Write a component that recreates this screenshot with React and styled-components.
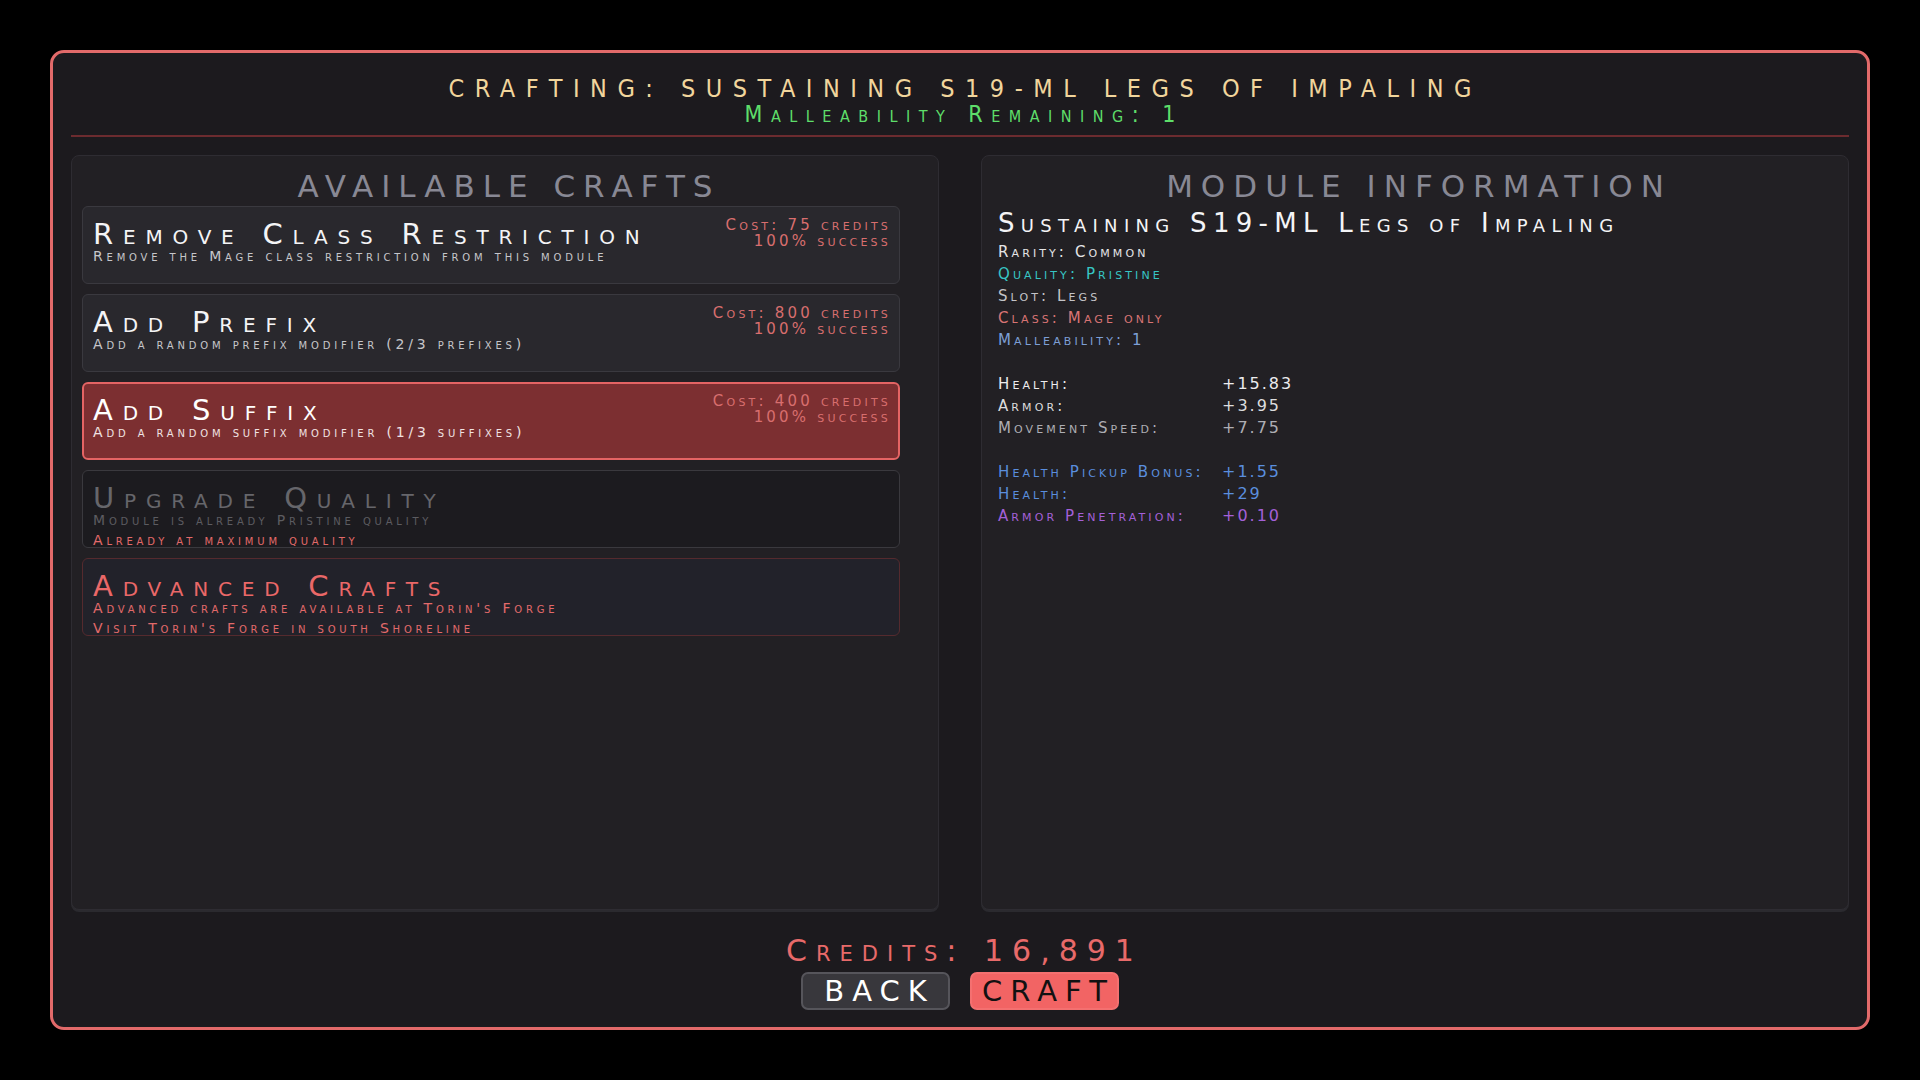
import React from 'react';
import styled, { createGlobalStyle } from 'styled-components';

const GlobalStyle = createGlobalStyle`
  body {
    margin: 0;
    background: #000;
    font-family: "DejaVu Sans", "Liberation Sans", sans-serif;
  }
`;

const crafts = [
  {
    title: 'Remove Class Restriction',
    desc: 'Remove the Mage class restriction from this module',
    cost: 'Cost: 75 credits',
    chance: '100% success',
  },
  {
    title: 'Add Prefix',
    desc: 'Add a random prefix modifier (2/3 prefixes)',
    cost: 'Cost: 800 credits',
    chance: '100% success',
  },
  {
    title: 'Add Suffix',
    desc: 'Add a random suffix modifier (1/3 suffixes)',
    cost: 'Cost: 400 credits',
    chance: '100% success',
    variant: 'selected',
  },
  {
    title: 'Upgrade Quality',
    desc: 'Module is already Pristine quality',
    notes: ['Already at maximum quality'],
    variant: 'disabled',
  },
  {
    title: 'Advanced Crafts',
    desc: 'Advanced crafts are available at Torin\'s Forge',
    notes: ['Visit Torin\'s Forge in south Shoreline'],
    variant: 'locked',
  },
];

const baseInfo = [
  { label: 'Rarity: Common', color: '#e4e4e6' },
  { label: 'Quality: Pristine', color: '#37c6c4' },
  { label: 'Slot: Legs', color: '#c4c4c8' },
  { label: 'Class: Mage only', color: '#d87474' },
  { label: 'Malleability: 1', color: '#7d9fd6' },
];

const baseStats = [
  { label: 'Health:', value: '+15.83', color: '#ececee' },
  { label: 'Armor:', value: '+3.95', color: '#dcdcde' },
  { label: 'Movement Speed:', value: '+7.75', color: '#aeaeb4' },
];

const bonusStats = [
  { label: 'Health Pickup Bonus:', value: '+1.55', color: '#5a8ede' },
  { label: 'Health:', value: '+29', color: '#5a8ede' },
  { label: 'Armor Penetration:', value: '+0.10', color: '#a460d8' },
];

const cardColors = {
  normal: { bg: '#29282d', border: '#3a393f', title: '#f4f4f6', desc: '#c6c6ca' },
  selected: { bg: '#7c2f31', border: '#e46464', title: '#ffffff', desc: '#f0e2e2' },
  disabled: { bg: '#1c1b1f', border: '#3a393e', title: '#66666b', desc: '#5c5c61' },
  locked: { bg: '#22222a', border: '#552a2e', title: '#ea6868', desc: '#e26a6a' },
};

const Crafting = () => {
  return (
    <Page>
      <GlobalStyle />
      <Frame>
        <Header>
          <Title>Crafting: Sustaining S19-ML Legs of Impaling</Title>
          <Subtitle>Malleability Remaining: 1</Subtitle>
        </Header>
        <Divider />
        <Panels>
          <Panel>
            <PanelHeading>Available Crafts</PanelHeading>
            <CraftList>
              {crafts.map((c) => {
                const v = c.variant || 'normal';
                return (
                  <Card key={c.title} $variant={v}>
                    <CardText>
                      <CardTitle $variant={v}>{c.title}</CardTitle>
                      <CardDesc $variant={v}>{c.desc}</CardDesc>
                      {c.notes && c.notes.map((n) => (
                        <CardNote key={n}>{n}</CardNote>
                      ))}
                    </CardText>
                    {c.cost && (
                      <Cost>
                        <div>{c.cost}</div>
                        <div>{c.chance}</div>
                      </Cost>
                    )}
                  </Card>
                );
              })}
            </CraftList>
          </Panel>
          <Panel>
            <PanelHeading>Module Information</PanelHeading>
            <InfoBody>
              <ModuleName>Sustaining S19-ML Legs of Impaling</ModuleName>
              {baseInfo.map((i) => (
                <InfoLine key={i.label} $color={i.color}>{i.label}</InfoLine>
              ))}
              <StatGroup>
                {baseStats.map((s) => (
                  <StatRow key={s.label} $color={s.color}>
                    <span>{s.label}</span>
                    <StatValue>{s.value}</StatValue>
                  </StatRow>
                ))}
              </StatGroup>
              <StatGroup>
                {bonusStats.map((s) => (
                  <StatRow key={s.label} $color={s.color}>
                    <span>{s.label}</span>
                    <StatValue>{s.value}</StatValue>
                  </StatRow>
                ))}
              </StatGroup>
            </InfoBody>
          </Panel>
        </Panels>
        <Footer>
          <Credits>Credits: 16,891</Credits>
          <Buttons>
            <ActionButton>Back</ActionButton>
            <ActionButton $primary>Craft</ActionButton>
          </Buttons>
        </Footer>
      </Frame>
    </Page>
  );
};

const Page = styled.div`
  width: 1920px;
  height: 1080px;
  box-sizing: border-box;
  padding: 50px 50px 50px 50px;
  background: #000;
`;

const Frame = styled.div`
  width: 1820px;
  height: 980px;
  box-sizing: border-box;
  border: 3px solid #e26a6a;
  border-radius: 14px;
  background: #1c1a1e;
  padding: 0 18px 17px;
  display: flex;
  flex-direction: column;
`;

const Header = styled.div`
  text-align: center;
  padding-top: 22px;
`;

const Title = styled.div`
  font-size: 25px;
  line-height: 28px;
  letter-spacing: 10.5px;
  text-indent: 10.5px;
  text-transform: uppercase;
  color: #f1d59c;
  font-stretch: condensed;
`;

const Subtitle = styled.div`
  font-size: 23px;
  line-height: 22px;
  letter-spacing: 8.5px;
  text-indent: 8.5px;
  font-variant: small-caps;
  color: #5ede6a;
  font-stretch: condensed;
`;

const Divider = styled.div`
  height: 2px;
  margin-top: 10px;
  background: #6c2b2f;
`;

const Panels = styled.div`
  flex: 1;
  display: grid;
  grid-template-columns: 1fr 1fr;
  gap: 42px;
  margin-top: 18px;
`;

const Panel = styled.div`
  background: #222024;
  border: 1px solid #2e2c32;
  border-radius: 8px;
  box-shadow: 0 2px 0 #2b2a2f;
  padding: 12px 10px;
  display: flex;
  flex-direction: column;
`;

const PanelHeading = styled.div`
  font-size: 31px;
  line-height: 36px;
  letter-spacing: 8px;
  text-indent: 8px;
  text-transform: uppercase;
  text-align: center;
  color: #888894;
`;

const CraftList = styled.div`
  display: flex;
  flex-direction: column;
  gap: 10px;
  margin-top: 2px;
  padding-right: 28px;
`;

const Card = styled.div`
  height: 78px;
  box-sizing: border-box;
  display: flex;
  justify-content: space-between;
  align-items: flex-start;
  padding: ${(p) => (p.$variant === 'selected' ? '11px 7px 0 9px' : '12px 8px 0 10px')};
  background: ${(p) => cardColors[p.$variant].bg};
  border: ${(p) => (p.$variant === 'selected' ? 2 : 1)}px solid ${(p) => cardColors[p.$variant].border};
  border-radius: 6px;
`;

const CardText = styled.div`
  display: flex;
  flex-direction: column;
`;

const CardTitle = styled.div`
  font-size: 29px;
  line-height: 30px;
  letter-spacing: 9.8px;
  font-variant: small-caps;
  white-space: nowrap;
  color: ${(p) => cardColors[p.$variant].title};
`;

const CardDesc = styled.div`
  font-size: 14px;
  line-height: 14px;
  letter-spacing: 3.8px;
  font-variant: small-caps;
  white-space: nowrap;
  color: ${(p) => cardColors[p.$variant].desc};
`;

const CardNote = styled.div`
  font-size: 14px;
  line-height: 14px;
  margin-top: 6px;
  letter-spacing: 3.8px;
  font-variant: small-caps;
  white-space: nowrap;
  color: #e26a6a;
`;

const Cost = styled.div`
  text-align: right;
  margin-top: -2px;
  font-size: 15px;
  line-height: 16px;
  letter-spacing: 3.2px;
  font-variant: small-caps;
  white-space: nowrap;
  color: #d86e6e;
`;

const InfoBody = styled.div`
  padding: 0 6px;
`;

const ModuleName = styled.div`
  font-size: 26px;
  line-height: 30px;
  margin-top: 4px;
  letter-spacing: 6.3px;
  font-variant: small-caps;
  white-space: nowrap;
  color: #f4f4f6;
  margin-bottom: 3px;
`;

const InfoLine = styled.div`
  font-size: 15px;
  line-height: 22px;
  letter-spacing: 3.1px;
  font-variant: small-caps;
  color: ${(p) => p.$color};
`;

const StatGroup = styled.div`
  margin-top: 22px;
`;

const StatRow = styled.div`
  display: grid;
  grid-template-columns: 224px auto;
  font-size: 15px;
  line-height: 22px;
  letter-spacing: 3.1px;
  font-variant: small-caps;
  white-space: nowrap;
  color: ${(p) => p.$color};
`;

const StatValue = styled.span`
  font-size: 16px;
  letter-spacing: 2px;
`;

const Footer = styled.div`
  margin-top: 24px;
  display: flex;
  flex-direction: column;
  align-items: center;
`;

const Credits = styled.div`
  font-size: 30px;
  line-height: 34px;
  letter-spacing: 9px;
  text-indent: 9px;
  font-variant: small-caps;
  color: #e86a6a;
`;

const Buttons = styled.div`
  display: flex;
  gap: 20px;
  margin-top: 4px;
`;

const ActionButton = styled.button`
  width: 149px;
  height: 38px;
  box-sizing: border-box;
  padding: 0 0 0 8px;
  border-radius: 7px;
  font-family: inherit;
  font-size: 29px;
  line-height: 34px;
  letter-spacing: 8px;
  text-align: center;
  text-transform: uppercase;
  background: ${(p) => (p.$primary ? '#f26464' : '#38373c')};
  border: 2px solid ${(p) => (p.$primary ? '#f47070' : '#56555b')};
  color: ${(p) => (p.$primary ? '#121112' : '#ffffff')};
`;

export default Crafting;
